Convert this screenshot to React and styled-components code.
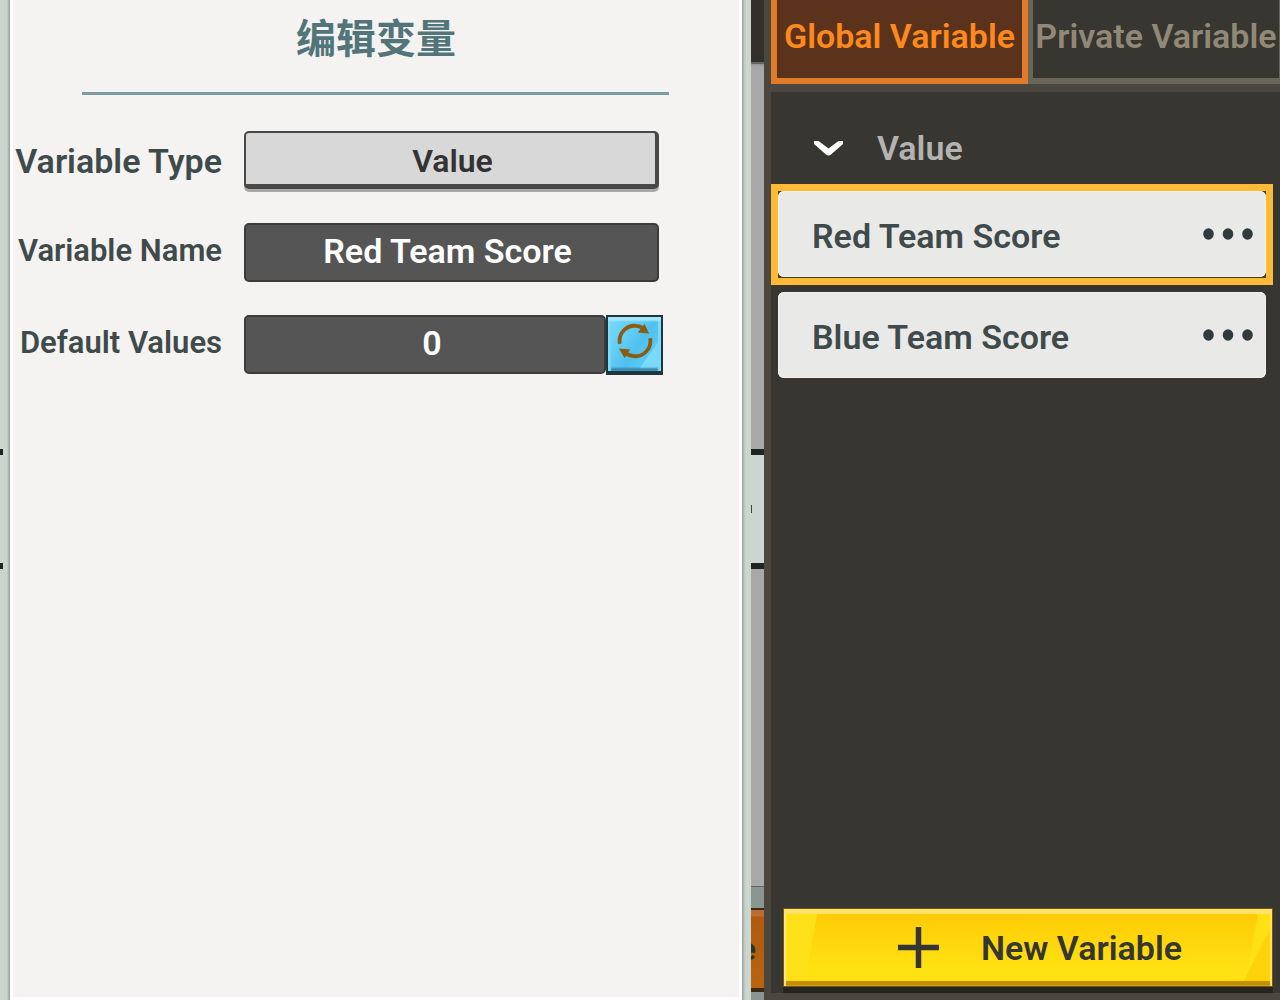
import React, { useState } from "react";
import styled, { createGlobalStyle, css } from "styled-components";

const GlobalStyle = createGlobalStyle`
  *, *::before, *::after { box-sizing: border-box; }
  html, body { margin: 0; }
  body {
    background: #373630;
    font-family: Roboto, "Noto Sans CJK SC", sans-serif;
    font-weight: 600;
    color: #3f4a4b;
    overflow: hidden;
  }
  button, input, select { font: inherit; color: inherit; margin: 0; }
  ul, h1, h2 { margin: 0; padding: 0; }
`;

const Screen = styled.main`
  display: grid;
  grid-template-columns: 10px minmax(0, 732fr) 9px 13px minmax(0, 516fr);
  min-height: 100vh;
`;

const EdgeLeft = styled.div`
  background: linear-gradient(90deg, #cad5cd 0 7px, #b4bfb9 8px, #929b98 10px);
  display: flex;
  flex-direction: column;
  padding-top: 449px;
  gap: 108px;
`;

const Notch = styled.span`
  width: 3px;
  height: 6px;
  background: #1e2421;
`;

const EdgeRight = styled.div`
  background: linear-gradient(90deg, #a3a8a4 0 1px, #bac5bf 2px, #cbd6ce 4px);
`;

const Dialog = styled.section`
  background: #f4f3f1;
  border: 3px solid #fdfdff;
  border-top: 0;
  min-width: 0;
`;

const Title = styled.h1`
  height: 92px;
  padding-top: 6px;
  text-align: center;
  font-family: "Noto Sans CJK SC", sans-serif;
  font-size: 40px;
  line-height: 60px;
  font-weight: 700;
  color: #52757a;
`;

const Rule = styled.hr`
  margin: 0 70px 0 69px;
  height: 3px;
  border: 0;
  background: #7b9ba5;
`;

const Form = styled.form`
  display: grid;
  grid-template-columns: 209px minmax(0, 1fr);
  grid-auto-rows: 59px;
  gap: 33px 22px;
  align-items: center;
  padding: 36px 80px 0 0;
`;

const Label = styled.label`
  display: flex;
  justify-content: flex-end;
  padding-bottom: ${(p) => (p.$large ? 0 : 4)}px;
  white-space: nowrap;
  font-size: ${(p) => (p.$large ? 34 : 31)}px;
  line-height: 40px;
`;

const TypeSelect = styled.select`
  appearance: none;
  align-self: start;
  width: 100%;
  height: 58px;
  padding: 4px 0 0 4px;
  border: 2px solid #484848;
  border-width: 2px 4px 5px 2px;
  border-radius: 5px;
  background: #d8d8d8;
  box-shadow: 0 3px 0 #aaa9a8;
  color: #333;
  font-size: 32px;
  text-align: center;
  text-align-last: center;
`;

const TextInput = styled.input`
  flex: 1;
  width: 100%;
  min-width: 0;
  height: 59px;
  padding: 0 ${(p) => (p.$joined ? 0 : 8)}px 4px ${(p) => (p.$joined ? 14 : 0)}px;
  border: 2px solid #3a3b3a;
  border-radius: 5px;
  background: #555;
  color: #fff;
  font-size: 34px;
  text-align: center;
`;

const Joined = styled.div`
  display: flex;
  align-items: center;
  margin-right: -4px;
`;

const RefreshButton = styled.button`
  display: flex;
  align-items: center;
  justify-content: center;
  width: 57px;
  height: 60px;
  padding: 0 0 6px;
  border: 2px solid #20343d;
  border-bottom-width: 4px;
  background: linear-gradient(125deg, #79d8fa 0%, #62cdf5 35%, #50c0ee 55%, #58c9f5 74%, #7bdafb 75%);
  box-shadow: inset 0 4px 2px #a3e6fb, inset 3px 0 1px #79d8f5, inset -3px 0 1px #79d8f5, inset 0 -3px 2px #318bb0;
`;

const Scenery = styled.div`
  display: flex;
  flex-direction: column;
  overflow: hidden;
`;

const Band = styled.div`
  flex: ${(p) => (p.$grow ? "1 0 auto" : "none")};
  height: ${(p) => (p.$h ? `${p.$h}px` : "auto")};
  background: ${(p) => p.$fill};
`;

const Node = styled.div`
  display: flex;
  align-items: center;
  height: 120px;
  border: solid #1f2522;
  border-width: 6px 0;
  background: #cad6ce;
`;

const Tick = styled.span`
  width: 1px;
  height: 8px;
  background: #3c4441;
`;

const ClippedButton = styled.button`
  display: flex;
  flex: none;
  justify-content: flex-end;
  align-items: center;
  height: 84px;
  padding: 0 8px 0 0;
  border: solid #3a2a16;
  border-width: 2px 0 4px;
  background: linear-gradient(#b96c33 0 6px, #b05a0f 7px, #b86410);
  color: #33302b;
  font-size: 32px;
`;

const Sidebar = styled.aside`
  display: flex;
  flex-direction: column;
  min-width: 0;
  border: solid #4b463e;
  border-width: 0 0 7px 7px;
  background: #373630;
`;

const Tabs = styled.div`
  display: grid;
  grid-template-columns: 257px minmax(252px, 1fr);
  height: 92px;
  border-bottom: 8px solid #4b463f;
  overflow: hidden;
`;

const Tab = styled.button`
  display: flex;
  justify-content: center;
  align-items: center;
  padding: 0 0 6px;
  border: 6px solid #696558;
  border-width: 0 1px 6px 5px;
  background: #373630;
  color: #918878;
  font-size: 34px;
  white-space: nowrap;
  ${(p) =>
    p.$active &&
    css`
      border-color: #e07c29;
      border-width: 0 6px 6px;
      background: #5b331d;
      color: #ff891c;
    `}
`;

const GroupToggle = styled.button`
  display: flex;
  align-items: center;
  gap: 33px;
  height: 92px;
  padding: 20px 42px 0;
  border: 0;
  background: none;
  color: #b3b3b2;
  font-size: 34px;
`;

const List = styled.ul`
  flex: 1;
  padding-right: 7px;
  list-style: none;
`;

const Item = styled.li`
  display: flex;
  align-items: stretch;
  height: 101px;
  border: 7px solid ${(p) => (p.$selected ? "#fcba37" : "transparent")};
  background: ${(p) => (p.$selected ? "#4a431c" : "transparent")};
  box-shadow: ${(p) => (p.$selected ? "inset 0 -1px 0 #4a3a1c" : "none")};
`;

const ItemBody = styled.div`
  display: flex;
  flex: 1;
  min-width: 0;
  margin-bottom: 1px;
  border-radius: 6px;
  background: #e9e9e8;
  box-shadow: inset 0 0 0 1px #f1f3ef;
`;

const ItemName = styled.button`
  flex: 1;
  padding: 4px 0 0 34px;
  border: 0;
  background: none;
  text-align: left;
  font-size: 34px;
  white-space: nowrap;
`;

const MoreButton = styled.button`
  display: flex;
  align-items: center;
  justify-content: flex-end;
  width: 74px;
  padding: 0 13px 0 0;
  border: 0;
  background: none;
  color: #2f3b3d;
`;

const Footer = styled.div`
  padding: 0 3px 0 9px;
`;

const NewButton = styled.button`
  display: flex;
  align-items: center;
  justify-content: center;
  gap: 42px;
  width: calc(100% - 7px);
  height: 79px;
  margin: 0 4px 6px 3px;
  padding: 0 0 0 24px;
  border: 1px solid #7a5515;
  background:
    linear-gradient(100deg, #ffe11a 0 33px, transparent 34px),
    linear-gradient(117deg, transparent calc(100% - 28px), #ffd20a calc(100% - 27px)),
    linear-gradient(100deg, transparent calc(100% - 27px), #ffe014 calc(100% - 26px)),
    linear-gradient(#ffc904, #ffd90d 50%, #ffe212 80%);
  box-shadow:
    inset 0 5px 1px #ffe36b,
    inset 2px 0 1px #ffe982,
    inset -2px 0 1px #ffe35c,
    inset 0 -5px 1px #c28d07,
    0 6px 0 #25241f;
  color: #353632;
  font-size: 34px;
`;

function RefreshIcon() {
  return (
    <svg width="36" height="36" viewBox="0 0 38 38" fill="none" stroke="#8a5c12" strokeWidth="4" aria-hidden="true">
      <path d="M3 22C1 10 11 2 20 3c4 .3 8 2 10 5" />
      <path d="M35 16c2 12-8 20-17 19-4-.3-8-2-10-5" />
      <path d="M29 1l5 10-12-1z" fill="#8a5c12" stroke="none" />
      <path d="M2 27l12 1-6 9z" fill="#8a5c12" stroke="none" />
    </svg>
  );
}

function Chevron() {
  return (
    <svg width="31" height="18" viewBox="0 0 31 18" fill="none" aria-hidden="true">
      <path d="M1 2H5.500L15.500 9.500L25.500 2H30V5L18 15.500Q15.500 17.500 13 15.500L1 5Z" fill="#fff" />
    </svg>
  );
}

function Dots() {
  return (
    <svg width="50" height="12" viewBox="0 0 50 12" fill="currentColor" aria-hidden="true">
      <ellipse cx="5.500" cy="6" rx="5.300" ry="5.800" />
      <ellipse cx="25" cy="6" rx="5.300" ry="5.800" />
      <ellipse cx="44.500" cy="6" rx="5.300" ry="5.800" />
    </svg>
  );
}

function Plus() {
  return (
    <svg width="41" height="41" viewBox="0 0 41 41" fill="none" stroke="#353632" strokeWidth="5.500" aria-hidden="true">
      <path d="M20.500 0v41M0 20.500h41" />
    </svg>
  );
}

const tabs = ["Global Variable", "Private Variable"];
const variables = ["Red Team Score", "Blue Team Score"];

export default function App() {
  const [tab, setTab] = useState(0);
  const [selected, setSelected] = useState(0);

  return (
    <>
      <GlobalStyle />
      <Screen>
        <EdgeLeft>
          <Notch />
          <Notch />
        </EdgeLeft>
        <Dialog>
          <Title>编辑变量</Title>
          <Rule />
          <Form onSubmit={(e) => e.preventDefault()}>
            <Label $large htmlFor="type">Variable Type</Label>
            <TypeSelect id="type" defaultValue="Value">
              <option>Value</option>
            </TypeSelect>
            <Label htmlFor="name">Variable Name</Label>
            <TextInput id="name" defaultValue="Red Team Score" />
            <Label htmlFor="initial">Default Values</Label>
            <Joined>
              <TextInput $joined id="initial" defaultValue="0" />
              <RefreshButton type="button" aria-label="Reset">
                <RefreshIcon />
              </RefreshButton>
            </Joined>
          </Form>
        </Dialog>
        <EdgeRight />
        <Scenery>
          <Band $h={62} $fill="#33302b" />
          <Band $h={2} $fill="#626766" />
          <Band $h={385} $fill="linear-gradient(#939393, #a9a8a8 3px)" />
          <Node>
            <Tick />
          </Node>
          <Band $grow $fill="#a9a8a8" />
          <Band $h={1} $fill="#5f6563" />
          <Band $h={21} $fill="#8c9691" />
          <ClippedButton>e</ClippedButton>
          <Band $h={8} $fill="#8c9691" />
        </Scenery>
        <Sidebar>
          <Tabs role="tablist">
            {tabs.map((name, i) => (
              <Tab key={name} role="tab" aria-selected={tab === i} $active={tab === i} onClick={() => setTab(i)}>
                {name}
              </Tab>
            ))}
          </Tabs>
          <GroupToggle aria-expanded="true">
            <Chevron />
            Value
          </GroupToggle>
          <List>
            {variables.map((name, i) => (
              <Item key={name} $selected={selected === i}>
                <ItemBody>
                  <ItemName onClick={() => setSelected(i)}>{name}</ItemName>
                  <MoreButton aria-label={`More options for ${name}`}>
                    <Dots />
                  </MoreButton>
                </ItemBody>
              </Item>
            ))}
          </List>
          <Footer>
            <NewButton>
              <Plus />
              New Variable
            </NewButton>
          </Footer>
        </Sidebar>
      </Screen>
    </>
  );
}
